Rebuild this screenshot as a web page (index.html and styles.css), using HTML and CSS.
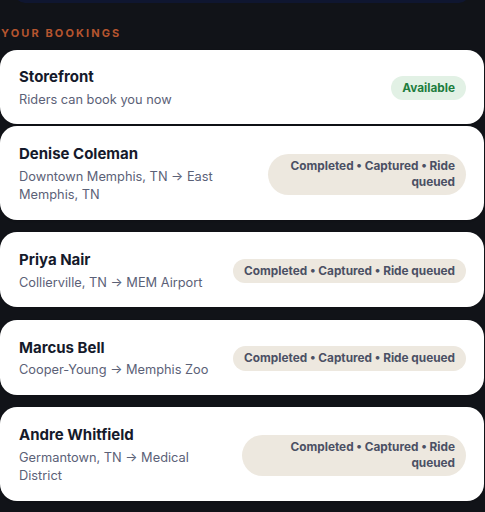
FILE: index.html
```html
<!DOCTYPE html>
<html lang="en">
<head>
    <meta charset="UTF-8">
    <meta name="viewport" content="width=device-width, initial-scale=1.0">
    <title>Your Bookings</title>
    <link rel="stylesheet" href="styles.css">
</head>
<body>
    <div class="top-panel"></div>

    <section class="bookings">
        <h2 class="section-title">Your Bookings</h2>

        <div class="booking-card storefront">
            <div class="booking-info">
                <h3>Storefront</h3>
                <p>Riders can book you now</p>
            </div>
            <span class="badge badge-available">Available</span>
        </div>

        <div class="booking-card">
            <div class="booking-info">
                <h3>Denise Coleman</h3>
                <p>Downtown Memphis, TN → East Memphis, TN</p>
            </div>
            <span class="badge">Completed • Captured • Ride queued</span>
        </div>

        <div class="booking-card">
            <div class="booking-info">
                <h3>Priya Nair</h3>
                <p>Collierville, TN → MEM Airport</p>
            </div>
            <span class="badge">Completed • Captured • Ride queued</span>
        </div>

        <div class="booking-card">
            <div class="booking-info">
                <h3>Marcus Bell</h3>
                <p>Cooper-Young → Memphis Zoo</p>
            </div>
            <span class="badge">Completed • Captured • Ride queued</span>
        </div>

        <div class="booking-card">
            <div class="booking-info">
                <h3>Andre Whitfield</h3>
                <p>Germantown, TN → Medical District</p>
            </div>
            <span class="badge">Completed • Captured • Ride queued</span>
        </div>
    </section>
</body>
</html>
```

FILE: styles.css
```css
:root {
    --page-bg: #111318;
    --panel-bg: #0f1630;
    --accent: #b5552f;
    --title-color: #151a2b;
    --muted: #5b6177;
}

* {
    margin: 0;
    padding: 0;
    box-sizing: border-box;
}

body {
    font-family: 'Inter', 'Noto Sans', sans-serif;
    background-color: var(--page-bg);
    width: 484px;
}

.top-panel {
    height: 20px;
    margin: -17px 15px 0;
    background-color: var(--panel-bg);
    border-radius: 16px;
}

.section-title {
    margin: 23px 0 10px 1px;
    font-size: 11px;
    font-weight: 700;
    letter-spacing: 2.1px;
    text-transform: uppercase;
    color: var(--accent);
    line-height: 14px;
}

.booking-card {
    display: flex;
    align-items: center;
    gap: 16px;
    background-color: white;
    border-radius: 17px;
    padding: 18px 18px 15px 19px;
    margin-bottom: 12.5px;
    box-shadow: 0 1px 2px rgba(0, 0, 0, 0.15);
}

.booking-card.storefront {
    padding: 17px 18px 15px 19px;
    margin-bottom: 2px;
}

.booking-info {
    flex: 0 1 auto;
    margin-right: auto;
}

.booking-info h3 {
    font-size: 15px;
    font-weight: 700;
    line-height: 20px;
    color: var(--title-color);
    margin-bottom: 3.5px;
}

.booking-info p {
    font-size: 12.8px;
    line-height: 18.5px;
    color: var(--muted);
}

.badge {
    flex: 0 1 auto;
    background-color: #ede8df;
    color: #4b5064;
    font-size: 11.8px;
    font-weight: 700;
    line-height: 16.5px;
    text-align: right;
    padding: 4px 11px;
    border-radius: 999px;
}

.badge-available {
    background-color: #e2f1e5;
    color: #1e7d3e;
}
```
